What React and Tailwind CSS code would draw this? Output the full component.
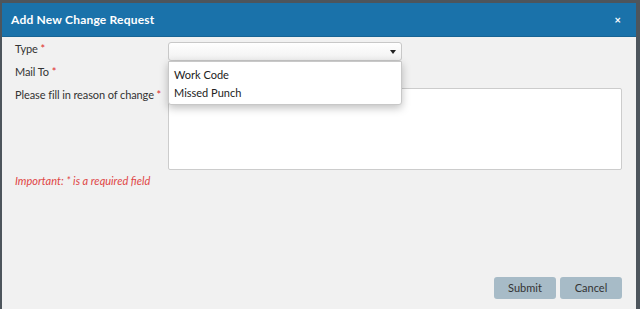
export default function App() {
  const font = { fontFamily: 'Lato, "Noto Sans", Arial, sans-serif' };
  return (
    <div className="w-[640px] h-[309px] bg-[#4d555c] pt-[3px] pl-[2px] pr-[4px] overflow-hidden" style={font}>
      <div className="flex flex-col h-[320px] bg-[#f1f1f1]">
        <div className="h-[34px] bg-[#1a72aa] flex items-center justify-between pl-[9px] pr-[15px] border-b border-[#176494]">
          <span className="text-white text-[12px] font-bold tracking-[0.2px]">Add New Change Request</span>
          <span className="text-white text-[11px] font-bold leading-none">×</span>
        </div>
        <div className="relative flex-1 pl-[13px] pr-[14px] pt-[1px]">
          <div className="flex">
            <div className="w-[153px] shrink-0 flex flex-col text-[11px] text-[#333] whitespace-nowrap tracking-[-0.1px]">
              <div className="h-[23px] flex items-center">Type&nbsp;<span className="text-[#e02b2b]">*</span></div>
              <div className="h-[23px] flex items-center">Mail To&nbsp;<span className="text-[#e02b2b]">*</span></div>
              <div className="h-[23px] flex items-center">Please fill in reason of change&nbsp;<span className="text-[#e02b2b]">*</span></div>
            </div>
            <div className="flex-1 flex flex-col">
              <div className="relative w-[234px] h-[19px] mt-[4px] rounded-[3px] border border-[#c8c8c8] bg-gradient-to-b from-white to-[#f1f1f1] flex items-center justify-end pr-[5px]">
                <svg width="6" height="4" viewBox="0 0 6 4"><path d="M0 0H6L3 4Z" fill="#222" /></svg>
                <div className="absolute left-[-1px] top-[18px] w-[234px] h-[44px] bg-white border border-[#c8c8c8] rounded-b-[3px] shadow-[0_3px_8px_rgba(0,0,0,0.25)] z-10 flex flex-col pl-[5px] pt-[4px] text-[11px] text-[#222]">
                  <div className="h-[18px] flex items-center">Work Code</div>
                  <div className="h-[18px] flex items-center">Missed Punch</div>
                </div>
              </div>
              <div className="mt-[27px] w-[454px] h-[82px] bg-white border border-[#cccccc] rounded-[2px]"></div>
            </div>
          </div>
          <div className="mt-[3px] text-[11px] italic text-[#e04545]">Important: * is a required field</div>
          <div className="absolute right-[14px] top-[240px] flex gap-[4px]">
            <button className="w-[62px] h-[22px] rounded-[3px] bg-[#a7bbc7] text-[11px] text-[#333]">Submit</button>
            <button className="w-[62px] h-[22px] rounded-[3px] bg-[#a7bbc7] text-[11px] text-[#333]">Cancel</button>
          </div>
        </div>
      </div>
    </div>
  );
}
